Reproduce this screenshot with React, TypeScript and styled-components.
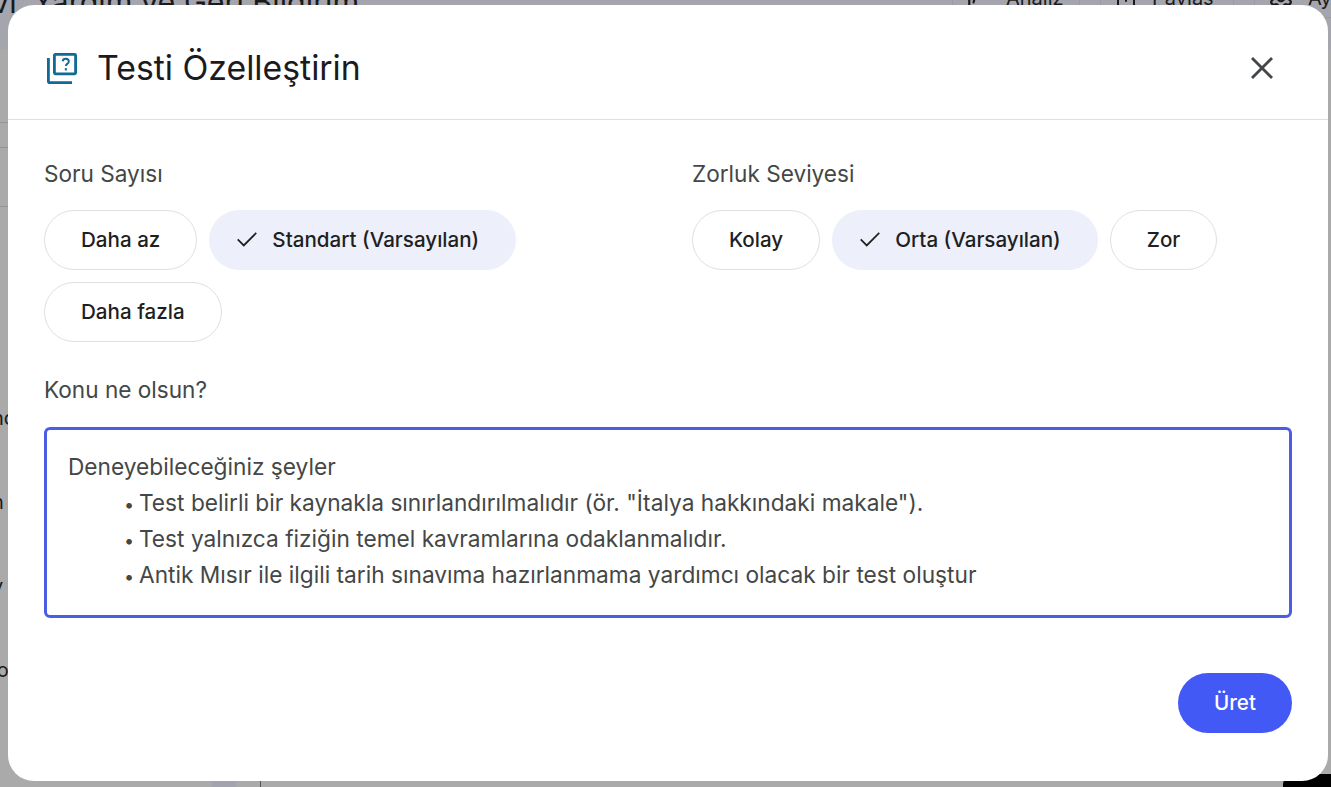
import styled, { createGlobalStyle } from 'styled-components'
import { X, Check, ChartSpline, Share, Settings } from 'lucide-react'

const GlobalStyle = createGlobalStyle`
  html, body {
    margin: 0;
    padding: 0;
    height: 100%;
    overflow: hidden;
  }
  body {
    font-family: 'Inter', 'Roboto', sans-serif;
  }
`

const questionCounts = [
  { label: 'Daha az' },
  { label: 'Standart (Varsayılan)', selected: true },
  { label: 'Daha fazla' },
]

const difficulties = [
  { label: 'Kolay' },
  { label: 'Orta (Varsayılan)', selected: true },
  { label: 'Zor' },
]

const suggestions = [
  'Test belirli bir kaynakla sınırlandırılmalıdır (ör. "İtalya hakkındaki makale").',
  'Test yalnızca fiziğin temel kavramlarına odaklanmalıdır.',
  'Antik Mısır ile ilgili tarih sınavıma hazırlanmama yardımcı olacak bir test oluştur',
]

const sideRows = ['nd', 'n', 'y', 'lo']

function QuizIcon() {
  return (
    <svg width="32" height="32" viewBox="0 0 32 32" fill="none">
      <path d="M2.4 6v23.2c0 .8.6 1.4 1.4 1.4H26" stroke="#0f6a94" strokeWidth="2.8" />
      <rect x="8.4" y="2.4" width="21.2" height="19.4" rx="1" stroke="#0f6a94" strokeWidth="2.8" />
      <path
        d="M16.6 9.2c.3-1.5 1.6-2.4 3.1-2.4 1.8 0 3.1 1.1 3.1 2.6 0 1.3-.7 1.9-1.6 2.5-.9.6-1.3 1.1-1.3 2.2"
        stroke="#0f6a94"
        strokeWidth="1.9"
      />
      <rect x="18.8" y="16.2" width="2.1" height="2.2" fill="#0f6a94" />
    </svg>
  )
}

function ChipList({ chips }: { chips: { label: string; selected?: boolean }[] }) {
  return (
    <Chips>
      {chips.map((chip) => (
        <Chip key={chip.label} $selected={chip.selected}>
          {chip.selected && <Check size={26} strokeWidth={1.6} strokeLinecap="square" strokeLinejoin="miter" />}
          {chip.label}
        </Chip>
      ))}
    </Chips>
  )
}

export default function App() {
  return (
    <Page>
      <GlobalStyle />
      <TopBar>
        <Crumbs>
          <BackCrumb>vı</BackCrumb>
          <BackTitle>Yardım ve Geri Bildirim</BackTitle>
        </Crumbs>
        <BackActions>
          <BackAction $width={128}>
            <ChartSpline size={26} />
            Analiz
          </BackAction>
          <BackAction $width={134}>
            <Share size={24} />
            Paylaş
          </BackAction>
          <BackAction $width={130}>
            <Settings size={26} />
            Ayarlar
          </BackAction>
        </BackActions>
      </TopBar>
      <BackBody>
        <SideRules>
          <SideRule $gap={72} />
          <SideRule $gap={24} />
          <SideRule $gap={58} />
        </SideRules>
        <SideList>
          {sideRows.map((row) => (
            <SideRow key={row}>{row}</SideRow>
          ))}
        </SideList>
      </BackBody>
      <BackFooter>
        <FooterChip />
        <FooterLine />
      </BackFooter>
      <CornerShade />
      <Dialog>
        <Header>
          <HeaderTitle>
            <QuizIcon />
            <Title>Testi Özelleştirin</Title>
          </HeaderTitle>
          <CloseButton>
            <X size={36} strokeWidth={1.9} strokeLinecap="square" />
          </CloseButton>
        </Header>
        <Body>
          <Columns>
            <Group>
              <Label>Soru Sayısı</Label>
              <ChipList chips={questionCounts} />
            </Group>
            <Group>
              <Label>Zorluk Seviyesi</Label>
              <ChipList chips={difficulties} />
            </Group>
          </Columns>
          <Label>Konu ne olsun?</Label>
          <TopicBox>
            <div>Deneyebileceğiniz şeyler</div>
            <SuggestionList>
              {suggestions.map((item) => (
                <li key={item}>{item}</li>
              ))}
            </SuggestionList>
          </TopicBox>
          <Footer>
            <GenerateButton>Üret</GenerateButton>
          </Footer>
        </Body>
      </Dialog>
    </Page>
  )
}

const Page = styled.div`
  position: relative;
  width: 1331px;
  height: 787px;
  overflow: hidden;
  background: #aaaaaa;
  display: flex;
  flex-direction: column;
`

const TopBar = styled.header`
  height: 50px;
  flex: none;
  background: #a5a5ad;
  display: flex;
  justify-content: space-between;
  align-items: flex-start;
  color: #1a1a1a;
`

const Crumbs = styled.div`
  display: flex;
  align-items: flex-start;
  margin-top: -14px;
  font-size: 30.5px;
  line-height: 32px;
`

const BackCrumb = styled.div`
  margin-left: -8px;
  width: 41px;
`

const BackTitle = styled.div`
  white-space: nowrap;
`

const BackActions = styled.div`
  display: flex;
  gap: 20px;
  margin-top: -22px;
  margin-right: -53px;
`

const BackAction = styled.div<{ $width: number }>`
  width: ${(props) => props.$width}px;
  height: 40px;
  box-sizing: border-box;
  padding-left: 13px;
  border: 1px solid #9a9aa2;
  display: flex;
  align-items: center;
  gap: 14px;
  font-size: 20px;
`

const BackBody = styled.div`
  flex: 1;
  display: flex;
  flex-direction: column;
  color: #1a1a1a;
`

const SideRules = styled.div`
  display: flex;
  flex-direction: column;
  width: 8px;
`

const SideRule = styled.div<{ $gap: number }>`
  margin-top: ${(props) => props.$gap}px;
  height: 1px;
  background: #949494;
`

const SideList = styled.div`
  margin-top: 199px;
  display: flex;
  flex-direction: column;
  gap: 59px;
`

const SideRow = styled.div`
  margin-left: -8px;
  font-size: 20px;
  line-height: 25px;
`

const BackFooter = styled.div`
  height: 6px;
  flex: none;
  display: flex;
  padding-left: 212px;
`

const FooterChip = styled.div`
  width: 24px;
  background: #a3a3b0;
`

const FooterLine = styled.div`
  width: 1px;
  margin-left: 24px;
  background: #555555;
`

const CornerShade = styled.div`
  position: absolute;
  right: 0;
  bottom: 0;
  width: 48px;
  height: 13px;
  background: #000000;
  border-top-left-radius: 10px;
`

const Dialog = styled.section`
  position: absolute;
  left: 8px;
  top: 5px;
  width: 1320px;
  height: 776px;
  background: #ffffff;
  border-radius: 26px;
  display: flex;
  flex-direction: column;
`

const Header = styled.div`
  height: 115px;
  flex: none;
  box-sizing: border-box;
  padding: 12px 48px 0 38px;
  border-bottom: 1px solid #e0e0e0;
  display: flex;
  align-items: center;
  justify-content: space-between;
`

const HeaderTitle = styled.div`
  display: flex;
  align-items: center;
  gap: 19px;
`

const Title = styled.h1`
  margin: 0;
  font-size: 33.8px;
  line-height: 44px;
  font-weight: 400;
  color: #1b1b1f;
`

const CloseButton = styled.button`
  border: 0;
  padding: 0;
  background: transparent;
  color: #44474a;
  display: flex;
`

const Body = styled.div`
  flex: 1;
  display: flex;
  flex-direction: column;
  padding: 40px 36px 0;
`

const Columns = styled.div`
  display: grid;
  grid-template-columns: 648px 1fr;
  min-height: 216px;
`

const Group = styled.div`
  display: flex;
  flex-direction: column;
`

const Label = styled.div`
  font-size: 22.6px;
  line-height: 28px;
  color: #444746;
`

const Chips = styled.div`
  display: flex;
  flex-wrap: wrap;
  gap: 12px;
  margin-top: 22px;
  max-width: 560px;
`

const Chip = styled.button<{ $selected?: boolean }>`
  height: 60px;
  box-sizing: border-box;
  padding: 0 36px 2px;
  padding-left: ${(props) => (props.$selected ? '24px' : '36px')};
  border-radius: 30px;
  border: 1px solid ${(props) => (props.$selected ? '#edeffa' : '#e0e0e0')};
  background: ${(props) => (props.$selected ? '#edeffa' : '#ffffff')};
  color: #1f1f1f;
  font-family: inherit;
  font-size: 20.6px;
  font-weight: 500;
  display: flex;
  align-items: center;
  gap: 12px;

  svg {
    margin-bottom: -2px;
  }
`

const TopicBox = styled.div`
  margin-top: 23px;
  height: 191px;
  flex: none;
  box-sizing: border-box;
  border: 3px solid #4a5de4;
  border-radius: 6px;
  padding: 19px 21px 0;
  font-size: 22.7px;
  line-height: 36px;
  color: #444746;
`

const SuggestionList = styled.ul`
  margin: 0;
  padding: 0 0 0 56px;
  list-style: none;

  li {
    height: 36px;
  }

  li::before {
    content: '•';
    display: inline-block;
    width: 15px;
    font-size: 18px;
    line-height: 1;
  }
`

const Footer = styled.div`
  display: flex;
  justify-content: flex-end;
  margin-top: 55px;
`

const GenerateButton = styled.button`
  width: 114px;
  height: 60px;
  padding: 0 0 2px;
  border: 0;
  border-radius: 30px;
  background: #4359f5;
  color: #ffffff;
  font-family: inherit;
  font-size: 20.6px;
  font-weight: 500;
`
